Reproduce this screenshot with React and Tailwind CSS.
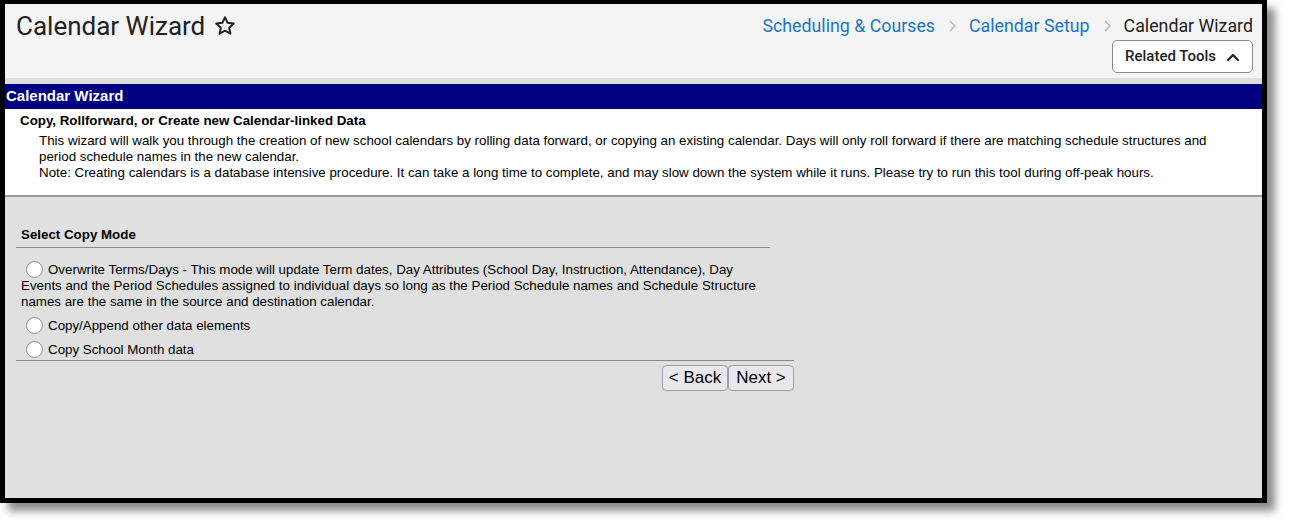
import React from "react";

const Radio = () => (
  <span className="mt-[1px] mr-[5px] ml-[5px] inline-block h-[17px] w-[17px] shrink-0 rounded-full border border-[#8f8f8f] bg-white" />
);

export default function App() {
  return (
    <div className="h-[529px] w-[1292px] bg-white" style={{ fontFamily: "'Liberation Sans', Arial, sans-serif" }}>
      <div className="flex h-[503px] w-[1267px] flex-col border-x-[5px] border-t-[4px] border-b-[5px] border-black bg-[#e0e0e0] shadow-[8px_8px_8px_rgba(0,0,0,0.45)]">
        {/* Header */}
        <div className="flex h-[74px] shrink-0 justify-between bg-[#f4f4f4] pl-[11px] pr-[9px]" style={{ fontFamily: "Roboto, sans-serif" }}>
          <div className="flex items-start pt-[6px]">
            <span className="text-[26px] leading-[32px] text-[#222]">Calendar Wizard</span>
            <svg className="ml-[8px] mt-[4px]" width="24" height="24" viewBox="0 0 24 24" fill="none" stroke="#222" strokeWidth="2" strokeLinejoin="round">
              <path d="M12 3.2l2.6 5.6 6.1.7-4.5 4.2 1.2 6-5.4-3-5.4 3 1.2-6-4.5-4.2 6.1-.7z" />
            </svg>
          </div>
          <div className="flex flex-col items-end pt-[10px]">
            <div className="flex items-center text-[17.8px] leading-[24px]">
              <span className="text-[#1b74c6]">Scheduling &amp; Courses</span>
              <svg className="mx-[12px]" width="10" height="14" viewBox="0 0 10 14" fill="none" stroke="#b4b4b4" strokeWidth="1.4"><path d="M3 2l5 5-5 5" /></svg>
              <span className="text-[#1b74c6]">Calendar Setup</span>
              <svg className="mx-[12px]" width="10" height="14" viewBox="0 0 10 14" fill="none" stroke="#b4b4b4" strokeWidth="1.4"><path d="M3 2l5 5-5 5" /></svg>
              <span className="text-[#222]">Calendar Wizard</span>
            </div>
            <div className="mt-[2px] flex h-[33px] w-[141px] items-center justify-center gap-[10px] rounded-[5px] border border-[#8a8a8a] bg-white text-[15px] font-medium text-[#222]">
              <span>Related Tools</span>
              <svg width="14" height="10" viewBox="0 0 14 10" fill="none" stroke="#222" strokeWidth="2.2" strokeLinecap="round" strokeLinejoin="round"><path d="M2 8l5-5 5 5" /></svg>
            </div>
          </div>
        </div>
        <div className="h-[6px] shrink-0 bg-[#dedede]" />
        {/* Navy bar */}
        <div className="flex h-[25px] shrink-0 items-center bg-[#000080] pl-[1px] text-[15px] font-bold text-white">Calendar Wizard</div>
        {/* Intro */}
        <div className="h-[88px] shrink-0 border-b-2 border-[#9a9a9a] bg-white pl-[15px] pt-[4px] text-[13.33px] leading-[16px] text-black">
          <div className="font-bold">Copy, Rollforward, or Create new Calendar-linked Data</div>
          <div className="pl-[19px] pr-[20px] pt-[4px]">
            This wizard will walk you through the creation of new school calendars by rolling data forward, or copying an existing calendar. Days will only roll forward if there are matching schedule structures and period schedule names in the new calendar.
            <br />
            Note: Creating calendars is a database intensive procedure. It can take a long time to complete, and may slow down the system while it runs. Please try to run this tool during off-peak hours.
          </div>
        </div>
        {/* Copy mode */}
        <div className="ml-[11px] mt-[30px] w-[778px] text-[13.33px] leading-[16px] text-black">
          <div className="w-[754px] border-b border-[#8a8a8a] pb-[4px] pl-[5px] font-bold">Select Copy Mode</div>
          <div className="w-[745px] pl-[5px] pt-[12px]">
            <div>
              <div className="flex items-start">
                <Radio />
                <span className="pt-[2px]">Overwrite Terms/Days - This mode will update Term dates, Day Attributes (School Day, Instruction, Attendance), Day</span>
              </div>
              <div>Events and the Period Schedules assigned to individual days so long as the Period Schedule names and Schedule Structure names are the same in the source and destination calendar.</div>
            </div>
            <div className="mt-[6px] flex items-start">
              <Radio />
              <span className="pt-[2px]">Copy/Append other data elements</span>
            </div>
            <div className="mt-[6px] flex items-start">
              <Radio />
              <span className="pt-[2px]">Copy School Month data</span>
            </div>
          </div>
          <div className="mt-[2px] border-t border-[#8a8a8a] pt-[4px]">
            <div className="flex justify-end">
              <button className="h-[26px] w-[66px] rounded-[4px] border border-[#9e9ea6] bg-[#e9e9ed] text-[17px] text-black">&lt; Back</button>
              <button className="h-[26px] w-[66px] rounded-[4px] border border-[#9e9ea6] bg-[#e9e9ed] text-[17px] text-black">Next &gt;</button>
            </div>
          </div>
        </div>
      </div>
    </div>
  );
}
